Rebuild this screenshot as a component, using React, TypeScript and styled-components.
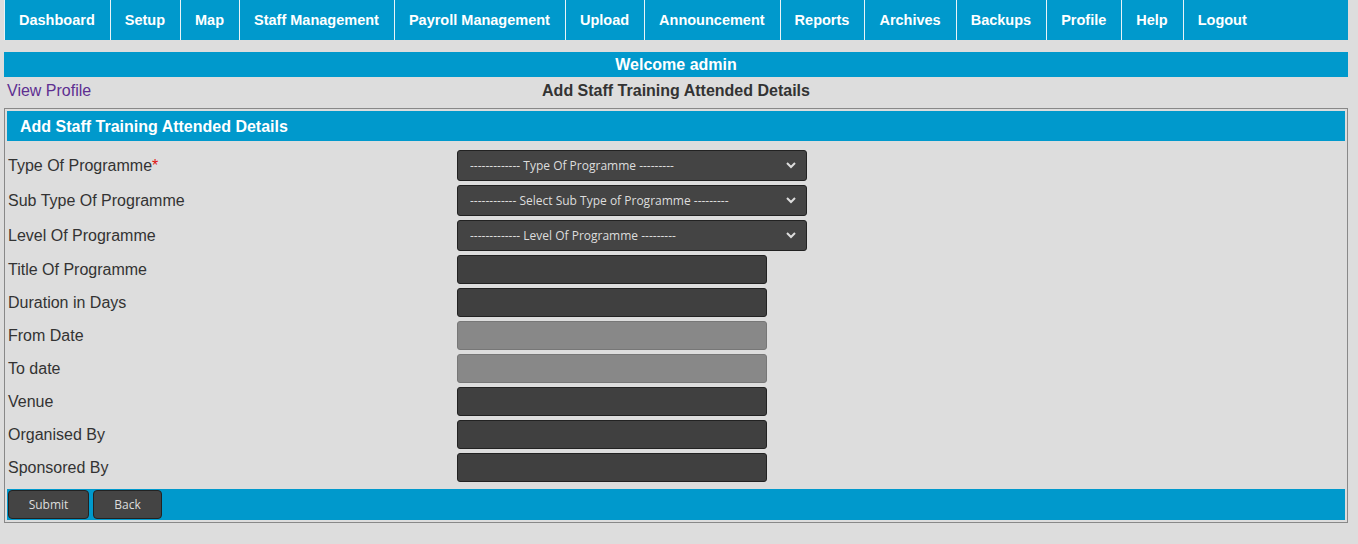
import styled, { createGlobalStyle } from "styled-components";

const GlobalStyle = createGlobalStyle`
    body {
        margin: 0;
        background-color: #dddddd;
        font-family: "Liberation Sans", Arial, sans-serif;
    }
`;

const Page = styled.div`
    margin: 0 10px 0 4px;
`;

const NavBar = styled.ul`
    display: flex;
    list-style: none;
    margin: 0;
    padding: 0;
    height: 40px;
    background-color: #0099cc;
`;

const NavItem = styled.li`
    display: flex;
    align-items: center;
    padding: 0 15px 0 14px;
    border-left: 1px solid #e8f4f8;
    color: #ffffff;
    font-weight: bold;
    font-size: 14.5px;
`;

const WelcomeBar = styled.div`
    margin-top: 12px;
    height: 25px;
    line-height: 25px;
    background-color: #0099cc;
    color: #ffffff;
    font-weight: bold;
    font-size: 16px;
    text-align: center;
`;

const TitleRow = styled.div`
    display: grid;
    grid-template-columns: 1fr auto 1fr;
    align-items: center;
    height: 24px;
    padding: 2px 3px 0;
    font-size: 16px;
`;

const ProfileLink = styled.a`
    color: #5e2f91;
    text-decoration: none;
`;

const PageTitle = styled.div`
    font-weight: bold;
    color: #333333;
`;

const Panel = styled.div`
    margin-top: 5px;
    border: 1px solid #888888;
    padding: 2px;
`;

const PanelHeader = styled.div`
    height: 30px;
    line-height: 32px;
    overflow: hidden;
    padding-left: 13px;
    background-color: #0099cc;
    color: #ffffff;
    font-weight: bold;
    font-size: 16px;
`;

const FormGrid = styled.div`
    display: grid;
    grid-template-columns: 450px 1fr;
    row-gap: 4px;
    align-items: center;
    padding: 9px 0 7px;
`;

const Label = styled.label`
    padding-left: 1px;
    font-size: 16px;
    color: #333333;
`;

const Required = styled.span`
    color: #e01010;
`;

const SelectWrap = styled.div`
    position: relative;
    width: 350px;
    height: 31px;
`;

const Select = styled.select`
    appearance: none;
    width: 100%;
    height: 100%;
    padding: 0 30px 0 12px;
    background-color: #444444;
    border: 1px solid #222222;
    border-radius: 3px;
    color: #dddddd;
    font-family: "Open Sans", "Noto Sans", sans-serif;
    font-size: 12px;
    outline: none;
`;

const Chevron = styled.svg`
    position: absolute;
    right: 11px;
    top: 11px;
    pointer-events: none;
`;

const TextInput = styled.input<{ $disabled?: boolean }>`
    box-sizing: border-box;
    width: 310px;
    height: 29px;
    background-color: ${(p) => (p.$disabled ? "#888888" : "#404040")};
    border: 1px solid ${(p) => (p.$disabled ? "#777777" : "#222222")};
    border-radius: 3px;
    outline: none;
`;

const Footer = styled.div`
    display: flex;
    gap: 4px;
    padding: 1px;
    background-color: #0099cc;
`;

const Button = styled.button<{ $width: number }>`
    width: ${(p) => p.$width}px;
    height: 29px;
    padding: 0;
    background-color: #444444;
    border: 1px solid #222222;
    border-radius: 4px;
    color: #dddddd;
    font-family: "Open Sans", "Noto Sans", sans-serif;
    font-size: 12px;
`;

const navItems = [
    "Dashboard", "Setup", "Map", "Staff Management", "Payroll Management", "Upload",
    "Announcement", "Reports", "Archives", "Backups", "Profile", "Help", "Logout",
];

const selects = [
    { label: "Type Of Programme", required: true, option: "------------- Type Of Programme ---------" },
    { label: "Sub Type Of Programme", option: "------------ Select Sub Type of Programme ---------" },
    { label: "Level Of Programme", option: "------------- Level Of Programme ---------" },
];

const inputs = [
    { label: "Title Of Programme" },
    { label: "Duration in Days" },
    { label: "From Date", disabled: true },
    { label: "To date", disabled: true },
    { label: "Venue" },
    { label: "Organised By" },
    { label: "Sponsored By" },
];

const ChevronIcon = () => (
    <Chevron width="10" height="8" viewBox="0 0 10 8">
        <path d="M1 2 L5 6 L9 2" fill="none" stroke="#dddddd" strokeWidth="2" />
    </Chevron>
);

const App = () => {
    return (
        <Page>
            <GlobalStyle />
            <NavBar>
                {navItems.map((item) => (
                    <NavItem key={item}>{item}</NavItem>
                ))}
            </NavBar>
            <WelcomeBar>Welcome admin</WelcomeBar>
            <TitleRow>
                <ProfileLink href="#">View Profile</ProfileLink>
                <PageTitle>Add Staff Training Attended Details</PageTitle>
                <span />
            </TitleRow>
            <Panel>
                <PanelHeader>Add Staff Training Attended Details</PanelHeader>
                <FormGrid>
                    {selects.map((s) => (
                        <>
                            <Label key={s.label}>
                                {s.label}
                                {s.required && <Required>*</Required>}
                            </Label>
                            <SelectWrap key={s.label + "-sel"}>
                                <Select>
                                    <option>{s.option}</option>
                                </Select>
                                <ChevronIcon />
                            </SelectWrap>
                        </>
                    ))}
                    {inputs.map((f) => (
                        <>
                            <Label key={f.label}>{f.label}</Label>
                            <div key={f.label + "-in"}>
                                <TextInput type="text" disabled={f.disabled} $disabled={f.disabled} />
                            </div>
                        </>
                    ))}
                </FormGrid>
                <Footer>
                    <Button $width={81}>Submit</Button>
                    <Button $width={69}>Back</Button>
                </Footer>
            </Panel>
        </Page>
    );
};

export default App;
